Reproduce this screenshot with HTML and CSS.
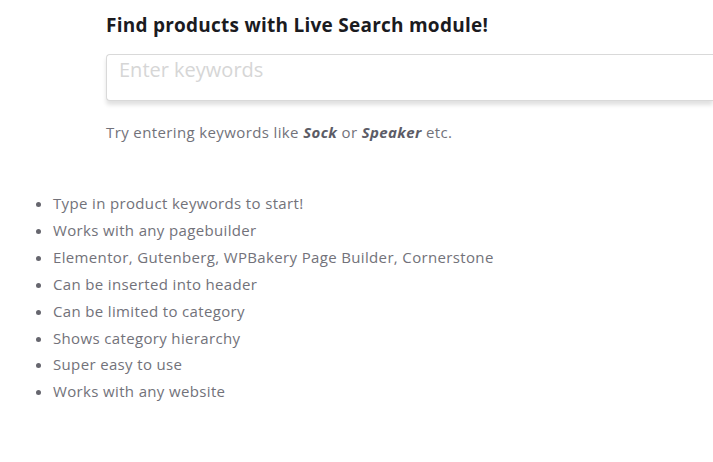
FILE: index.html
```html
<!DOCTYPE html>
<html>
<head>
<title>Live Search</title>
<link rel="stylesheet" href="styles.css">
</head>
<body>
    <section class="search-demo">
        <h2 class="title">Find products with Live Search module!</h2>
        <input class="search-field" type="text" placeholder="Enter keywords">
        <p class="hint">Try entering keywords like <em>Sock</em> or <em>Speaker</em> etc.</p>
    </section>
    <ul class="features">
        <li>Type in product keywords to start!</li>
        <li>Works with any pagebuilder</li>
        <li>Elementor, Gutenberg, WPBakery Page Builder, Cornerstone</li>
        <li>Can be inserted into header</li>
        <li>Can be limited to category</li>
        <li>Shows category hierarchy</li>
        <li>Super easy to use</li>
        <li>Works with any website</li>
    </ul>
</body>
</html>
```

FILE: styles.css
```css
/**
 * Generic styles
 */
* {
    box-sizing: border-box;
}
body {
    margin: 0;
    background-color: #fff;
    font-family: "Open Sans", sans-serif;
    color: #72727a;
    overflow: hidden;
}

/**
 * Search block
 */
.search-demo {
    display: flex;
    flex-direction: column;
    padding: 11px 0 0 106px;
}
.title {
    margin: 0;
    font-family: "Open Sans", sans-serif;
    font-size: 19px;
    font-weight: 700;
    letter-spacing: 0.25px;
    line-height: 28px;
    color: #1b1b1f;
}
/* the field runs off the right edge in the original, so no right border */
.search-field {
    margin-top: 15px;
    width: 100%;
    height: 47px;
    padding: 0 12px 16px;
    border: 1px solid #d9d9d9;
    border-right: none;
    border-radius: 4px 0 0 4px;
    background-color: #fff;
    box-shadow: 0 4px 4px rgba(0, 0, 0, 0.12);
    font-family: "Open Sans", sans-serif;
    font-size: 20px;
    outline: none;
}
.search-field::placeholder {
    color: #d6d6d6;
}
.hint {
    margin: 19px 0 0;
    font-size: 15px;
    letter-spacing: 0.38px;
    line-height: 24px;
}
.hint em {
    font-weight: 700;
    color: #5c5c66;
}

/**
 * Feature list
 */
.features {
    margin: 46px 0 0;
    padding: 0 0 0 53px;
    font-size: 15px;
    letter-spacing: 0.35px;
    line-height: 26.9px;
}
.features li::marker {
    color: #66666e;
}
```
